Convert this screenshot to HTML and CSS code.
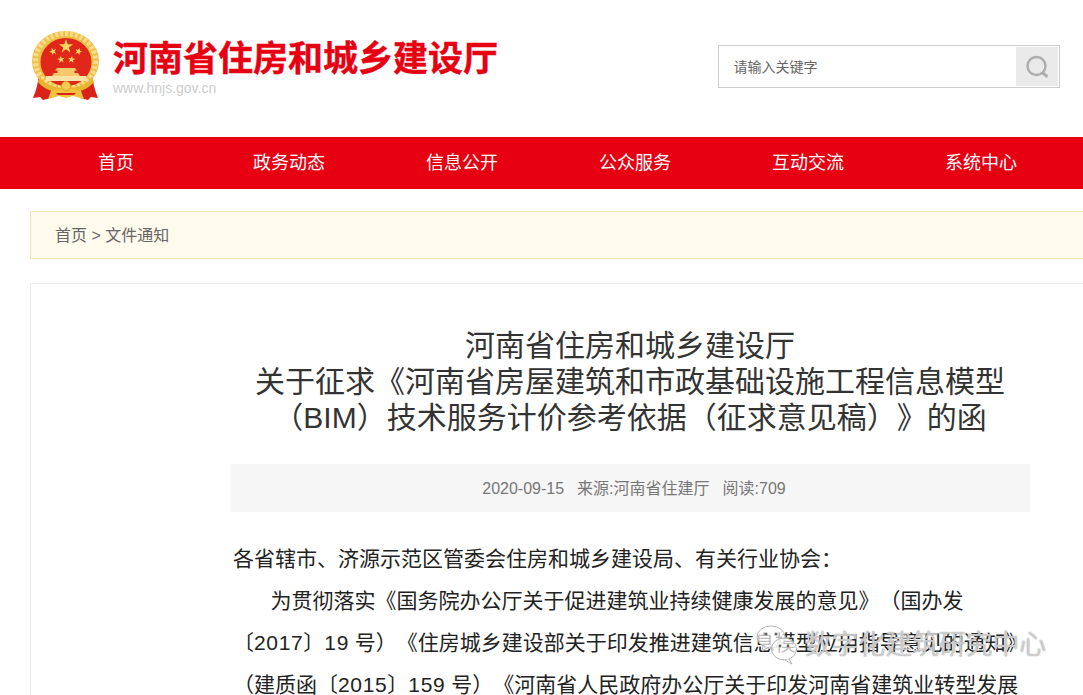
FILE: index.html
```html
<!DOCTYPE html>
<html lang="zh-CN">
<head>
    <meta charset="UTF-8">
    <meta name="viewport" content="width=device-width, initial-scale=1.0">
    <title>河南省住房和城乡建设厅</title>
    <link rel="stylesheet" href="styles.css">
</head>
<body>
    <!-- Top: logo and search -->
    <header class="top">
        <div class="brand">
            <svg class="emblem" viewBox="0 0 70 72" width="70" height="72" aria-hidden="true">
                <defs>
                    <polygon id="star" points="0,-1 .225,-.309 .951,-.309 .363,.118 .588,.809 0,.382 -.588,.809 -.363,.118 -.951,-.309 -.225,-.309"/>
                </defs>
                <!-- ribbons behind the ring -->
                <path d="M8 44 C7 52 5 60 2 67 L9 66 L12 69 L20 67 L24 56 Z" fill="#d9221a"/>
                <path d="M61 44 C62 52 64 60 67 67 L60 66 L57 69 L49 67 L45 56 Z" fill="#d9221a"/>
                <!-- wheat ring -->
                <ellipse cx="34.500" cy="30" rx="33.500" ry="30" fill="#eebf45"/>
                <ellipse cx="34.500" cy="30" rx="30" ry="27.500" fill="none" stroke="#f8dc8c" stroke-width="5" stroke-dasharray="3 2"/>
                <ellipse cx="35" cy="31" rx="25.500" ry="24" fill="#e1261a"/>
                <!-- stars -->
                <g fill="#f9d85e">
                    <use href="#star" transform="translate(35 15.500) scale(7.500)"/>
                    <use href="#star" transform="translate(22 20.500) rotate(-20) scale(4)"/>
                    <use href="#star" transform="translate(47.500 20.500) rotate(20) scale(4)"/>
                    <use href="#star" transform="translate(30 28.500) rotate(-8) scale(4)"/>
                    <use href="#star" transform="translate(40.500 28.500) rotate(8) scale(4)"/>
                </g>
                <!-- gate -->
                <path d="M26 37 H44 L46 39.500 H43.500 V42 H47 L49 45 H21 L23 42 H26.500 V39.500 H24 Z" fill="#f3c96c"/>
                <rect x="15" y="45" width="40" height="5" fill="#f8e2a6"/>
                <!-- lower band -->
                <path d="M9 46 C14 54 24 57 35 57 C46 57 56 54 61 46 L63 51 C57 59 46 62 35 62 C24 62 13 59 7 51 Z" fill="#e9b52f"/>
                <path d="M20 60 L35 57 L50 60 L53 68 L42 65 L35 67 L28 65 L17 68 Z" fill="#f2c23e"/>
                <path d="M25 62 H45 L43 64 H27 Z" fill="#d9221a"/>
                <circle cx="35" cy="55" r="4.500" fill="#f5ce52" stroke="#d99f25" stroke-width="1"/>
            </svg>
            <div class="brand-text">
                <div class="brand-name">河南省住房和城乡建设厅</div>
                <div class="brand-url">www.hnjs.gov.cn</div>
            </div>
        </div>
        <form class="search">
            <input class="search-input" type="text" placeholder="请输入关键字">
            <button class="search-btn" type="button" aria-label="搜索">
                <svg viewBox="0 0 24 24" width="24" height="24" fill="none" stroke="#adadad" aria-hidden="true">
                    <circle cx="11.500" cy="11" r="9" stroke-width="2.400"/>
                    <path d="M18 18 L21.500 21" stroke-width="3" stroke-linecap="round"/>
                </svg>
            </button>
        </form>
    </header>

    <!-- Main nav -->
    <nav class="mainnav">
        <a href="#">首页</a>
        <a href="#">政务动态</a>
        <a href="#">信息公开</a>
        <a href="#">公众服务</a>
        <a href="#">互动交流</a>
        <a href="#">系统中心</a>
    </nav>

    <main class="wrap">
        <div class="crumb">首页 &gt; 文件通知</div>

        <article class="article">
            <h1 class="article-title">河南省住房和城乡建设厅<br>关于征求《河南省房屋建筑和市政基础设施工程信息模型<br>（BIM）技术服务计价参考依据（征求意见稿）》的函</h1>
            <div class="meta">
                <span>2020-09-15</span>
                <span>来源:河南省住建厅</span>
                <span>阅读:709</span>
            </div>
            <div class="article-body">
                <p>各省辖市、济源示范区管委会住房和城乡建设局、有关行业协会：</p>
                <p class="indent">为贯彻落实《国务院办公厅关于促进建筑业持续健康发展的意见》（国办发<br>〔<span class="num">2017</span>〕<span class="num">19</span> 号）《住房城乡建设部关于印发推进建筑信息模型应用指导意见的通知》<br>（建质函〔<span class="num">2015</span>〕<span class="num">159</span> 号）《河南省人民政府办公厅关于印发河南省建筑业转型发展</p>
            </div>
        </article>
    </main>

    <!-- Account watermark over the screenshot -->
    <div class="watermark">
        <svg viewBox="0 0 42 40" width="42" height="40" fill="rgba(255,255,255,.7)" stroke="#b4b4b4" stroke-width="1" aria-hidden="true">
            <ellipse cx="15" cy="12" rx="14" ry="11"/>
            <path d="M7 21 L6 26 L12 22.500"/>
            <ellipse cx="28" cy="24" rx="12.500" ry="11"/>
            <path d="M33 34 L36 39 L29 35"/>
            <circle cx="10" cy="9" r="1.600" fill="#666" stroke="none"/>
            <circle cx="20" cy="9" r="1.600" fill="#666" stroke="none"/>
            <circle cx="24" cy="21" r="1.400" fill="#666" stroke="none"/>
            <circle cx="32" cy="21" r="1.400" fill="#666" stroke="none"/>
        </svg>
        <span class="watermark-text">数字化建筑研究中心</span>
    </div>
</body>
</html>
```

FILE: styles.css
```css
/* Reset and basic styles */
* {
    margin: 0;
    padding: 0;
    box-sizing: border-box;
}

html, body {
    height: 100vh;
    overflow: hidden;
}

body {
    position: relative;
    font-family: "Liberation Sans", "Noto Sans CJK SC", sans-serif;
    color: #333;
    background-color: #fff;
    text-spacing-trim: space-all;
}

/* Header */
.top {
    height: 137px;
    display: flex;
    justify-content: space-between;
    padding: 31px 23px 0 31px;
}

.brand {
    display: flex;
    align-items: flex-start;
    gap: 12px;
}

.brand-name {
    margin-top: 6px;
    font-size: 35px;
    line-height: 44px;
    font-weight: 700;
    color: #e60012;
    -webkit-text-stroke: 0.4px #e60012;
}

.brand-url {
    margin-top: -2px;
    font-size: 14px;
    line-height: 18px;
    color: #ccc;
}

.search {
    display: flex;
    width: 342px;
    height: 43px;
    margin-top: 14px;
    padding: 1px;
    border: 1px solid #ccc;
}

.search-input {
    flex: 1;
    min-width: 0;
    padding-left: 13.500px;
    border: 0;
    outline: 0;
    font-family: inherit;
    font-size: 14px;
}

.search-input::placeholder {
    color: #666;
    opacity: 1;
}

.search-btn {
    display: flex;
    align-items: center;
    justify-content: center;
    width: 42px;
    border: 0;
    background-color: #eaeaea;
}

/* Main nav */
.mainnav {
    display: flex;
    height: 52px;
    padding-left: 29.500px;
    background-color: #e60012;
}

.mainnav a {
    width: 173px;
    text-align: center;
    font-size: 18px;
    line-height: 52px;
    color: #fff;
    text-decoration: none;
}

/* Content */
.wrap {
    width: 1200px;
    margin: 22px 0 0 30px;
}

.crumb {
    height: 48px;
    padding-left: 24px;
    border: 1px solid #f3e5b8;
    background-color: #fffbec;
    font-size: 16px;
    line-height: 47px;
    color: #666;
}

.article {
    margin-top: 24px;
    padding: 44px 199px 0 200px;
    border: 1px solid #ececec;
    border-bottom: 0;
}

.article-title {
    padding-right: 1px;
    font-size: 30px;
    font-weight: 400;
    line-height: 36px;
    text-align: center;
    color: #333;
}

.meta {
    display: flex;
    justify-content: center;
    gap: 13px;
    height: 48px;
    margin-top: 28px;
    padding-left: 7px;
    background-color: #f6f6f6;
    font-size: 16px;
    line-height: 49px;
    color: #777;
}

.article-body {
    margin-top: 26px;
    padding-left: 2px;
    font-size: 21px;
    line-height: 42px;
    color: #222;
}

.article-body .indent {
    text-indent: 37.500px;
}

.num {
    letter-spacing: 0.650px;
}

/* Watermark */
.watermark {
    position: absolute;
    left: 756px;
    top: 625px;
    display: flex;
    align-items: center;
    gap: 7px;
}

.watermark-text {
    font-size: 26.800px;
    line-height: 40px;
    color: rgba(255, 255, 255, 0.6);
    text-shadow: 0 0 1px #777;
}
```
